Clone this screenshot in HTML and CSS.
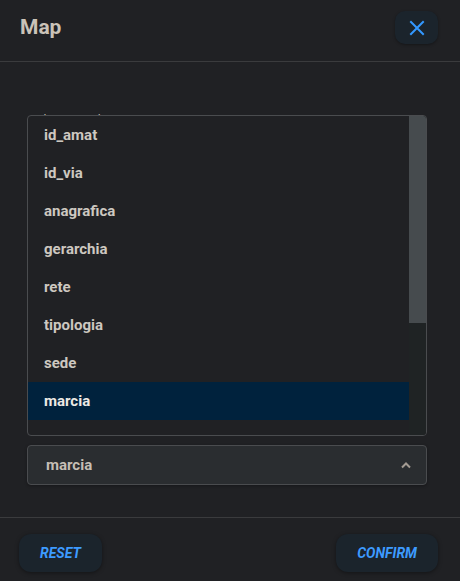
FILE: index.html
```html
<!DOCTYPE html>
<html lang="it">
<head>
<meta charset="utf-8">
<title>Map</title>
<link rel="stylesheet" href="styles.css">
</head>
<body>
<div class="dialog">
  <header class="dialog-header">
    <h1 class="dialog-title">Map</h1>
    <button class="icon-btn" aria-label="Chiudi">
      <svg width="16" height="16" viewBox="0 0 16 16" aria-hidden="true"><path d="M2 2 L14 14 M14 2 L2 14" stroke="#3398ff" stroke-width="2" stroke-linecap="square" fill="none"/></svg>
    </button>
  </header>
  <main class="dialog-body">
    <div class="field">
      <label class="field-label">Seleziona colonna</label>
      <div class="listbox" role="listbox">
        <div class="options">
          <div class="option">id_amat</div>
          <div class="option">id_via</div>
          <div class="option">anagrafica</div>
          <div class="option">gerarchia</div>
          <div class="option">rete</div>
          <div class="option">tipologia</div>
          <div class="option">sede</div>
          <div class="option selected">marcia</div>
        </div>
        <div class="scroll-track"><div class="scroll-thumb"></div></div>
      </div>
      <div class="select">
        <span class="select-value">marcia</span>
        <svg width="12" height="8" viewBox="0 0 12 8" aria-hidden="true"><path d="M2 6.5 L6 2.5 L10 6.5" stroke="#a39b92" stroke-width="2" fill="none"/></svg>
      </div>
    </div>
  </main>
  <footer class="dialog-footer">
    <button class="btn">RESET</button>
    <button class="btn">CONFIRM</button>
  </footer>
</div>
</body>
</html>
```

FILE: styles.css
```css
* { box-sizing: border-box; }
html, body { margin: 0; height: 100%; }
body {
  background: #202124;
  font-family: Roboto, "Noto Sans", sans-serif;
  color: #cdc6bd;
}
.dialog { display: flex; flex-direction: column; height: 581px; }
.dialog-header {
  height: 62px;
  display: flex;
  align-items: flex-start;
  justify-content: space-between;
  padding: 11px 22px 0 20px;
  border-bottom: 1px solid #3a3b3d;
}
.dialog-title {
  margin: 2px 0 0;
  font-size: 21px;
  font-weight: 700;
  line-height: 28px;
  color: #cbc3b8;
}
.icon-btn {
  width: 43px;
  height: 33px;
  border: 0;
  border-radius: 10px;
  background: #1b242c;
  display: flex;
  align-items: center;
  justify-content: center;
  box-shadow: 0 1px 3px rgba(0,0,0,0.35);
  padding: 0;
}
.dialog-body {
  flex: 1;
  padding: 51px 33px 0 27px;
}
.field { position: relative; }
.field-label {
  display: block;
  font-size: 12px;
  line-height: 14px;
  padding-left: 3px;
  color: #bdb6ad;
  height: 14px;
}
.listbox {
  position: absolute;
  top: 2px;
  left: 0;
  right: 0;
  height: 321px;
  background: #202124;
  border: 1px solid #4a4c4f;
  border-radius: 4px;
  display: flex;
  overflow: hidden;
  z-index: 2;
}
.options { flex: 1; }
.scroll-track {
  width: 17px;
  background: #1f2324;
}
.scroll-thumb {
  height: 207px;
  background: #464b4e;
}
.option {
  height: 38px;
  line-height: 38px;
  padding-left: 16px;
  font-size: 15px;
  font-weight: 700;
  color: #cdc8c0;
}
.option.selected { background: #00223d; color: #ece9e4; }
.select {
  margin-top: 318px;
  height: 40px;
  background: #2a2d30;
  border: 1px solid #4a4c4f;
  border-radius: 4px;
  display: flex;
  align-items: center;
  justify-content: space-between;
  padding: 0 14px 0 18px;
  box-shadow: 0 1px 3px rgba(0,0,0,0.3);
}
.select-value { font-size: 15px; font-weight: 700; color: #c5beb5; }
.dialog-footer {
  height: 64px;
  border-top: 1px solid #3a3b3d;
  display: flex;
  justify-content: space-between;
  align-items: flex-start;
  padding: 16px 22px 0 19px;
}
.btn {
  height: 38px;
  padding: 0 21px;
  border: 0;
  border-radius: 12px;
  background: #1b242c;
  color: #3d9bff;
  font-family: Roboto, "Noto Sans", sans-serif;
  font-size: 14px;
  font-weight: 700;
  font-style: italic;
  box-shadow: 0 1px 4px rgba(0,0,0,0.4);
}
```
